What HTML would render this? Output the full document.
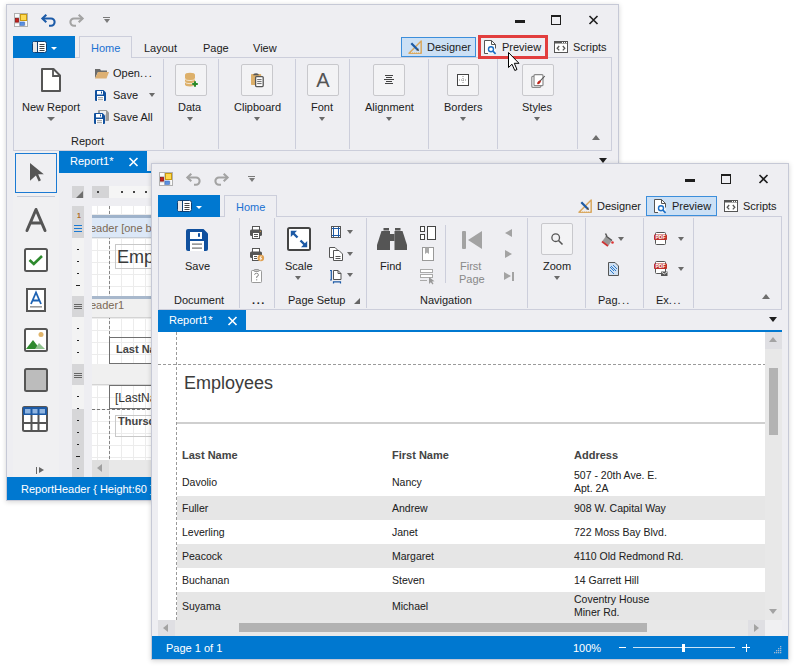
<!DOCTYPE html>
<html><head><meta charset="utf-8">
<style>
*{margin:0;padding:0;box-sizing:border-box}
html,body{width:795px;height:668px;overflow:hidden;background:#fff;font-family:"Liberation Sans",sans-serif;color:#1e1e1e}
.t,.a{-webkit-text-stroke:0.04px currentColor}
.a{position:absolute}
.win{position:absolute;background:#eeeef2;box-shadow:inset 0 0 0 1px #c6c9d6,0 1px 5px rgba(0,0,0,0.17)}
.t{position:absolute;font-size:11px;line-height:13px;white-space:nowrap;margin-top:1px}
.panel{position:absolute;border:1px solid #cccedb;border-top-color:#cccedb}
.sep{position:absolute;width:1px;background:#cccedb}
.status{position:absolute;background:#0078d0;color:#fff}
.tri{position:absolute;width:0;height:0;border-left:3.5px solid transparent;border-right:3.5px solid transparent;border-top:4px solid #6a6a6a;margin-left:0.5px}
.btnbox{position:absolute;width:32px;height:32px;border:1px solid #c8c8cc;border-radius:2px;background:#f3f3f5}
svg{position:absolute;overflow:visible}
</style></head><body>

<!-- ================= WINDOW 1 (Designer) ================= -->
<div class="win" id="w1" style="left:6px;top:4px;width:613px;height:497px">
  <!-- title bar -->
  <svg style="left:8px;top:9px" width="14" height="14" viewBox="0 0 14 14">
    <rect x="0.5" y="0.5" width="13" height="13" fill="#fafafa" stroke="#b0b0b0"/>
    <path d="M1 4.5 H5.5 M5.5 1 V13 M1 10 H5.5 M10.8 9 V13" stroke="#c8c8c8" stroke-width="1"/>
    <rect x="6.5" y="1.5" width="6" height="6" fill="#ffd94f" stroke="#c99a10"/>
    <rect x="1.5" y="5.5" width="3" height="3.6" fill="#c8201a" stroke="#8a1010" stroke-width="0.8"/>
    <rect x="6" y="9" width="4.3" height="3.4" fill="#5b90e0" stroke="#3a6cc0" stroke-width="0.6"/>
  </svg>
  <svg style="left:35px;top:10px" width="15" height="12" viewBox="0 0 15 12">
    <path d="M1.5 4.5 H10 A3.6 3.6 0 0 1 10 11.7 H8" fill="none" stroke="#1c5ba8" stroke-width="2.1"/>
    <path d="M5.3 0.8 L1.4 4.5 L5.3 8.2" fill="none" stroke="#1c5ba8" stroke-width="2.1"/>
  </svg>
  <svg style="left:63px;top:10px" width="15" height="12" viewBox="0 0 15 12">
    <path d="M13.5 4.5 H5 A3.6 3.6 0 0 0 5 11.7 H7" fill="none" stroke="#a3a3a3" stroke-width="2.1"/>
    <path d="M9.7 0.8 L13.6 4.5 L9.7 8.2" fill="none" stroke="#a3a3a3" stroke-width="2.1"/>
  </svg>
  <div class="a" style="left:97px;top:13px;width:7px;height:1px;background:#7a7a7a"></div>
  <div class="tri" style="left:97px;top:15px;border-left-width:3.5px;border-right-width:3.5px;border-top-width:4px;border-top-color:#7a7a7a"></div>
  <div class="a" style="left:509px;top:16px;width:10px;height:3px;background:#1e1e1e"></div>
  <div class="a" style="left:545px;top:11px;width:10px;height:10px;border:1px solid #1e1e1e;border-top-width:2px"></div>
  <svg style="left:583px;top:12px" width="9" height="8" viewBox="0 0 9 8"><path d="M0.5 0 L8.5 8 M8.5 0 L0.5 8" stroke="#1e1e1e" stroke-width="1.6"/></svg>

  <!-- tabs -->
  <div class="a" style="left:7px;top:32px;width:62px;height:22px;background:#0078d0;z-index:2"></div>
  <svg style="left:26px;top:37px;z-index:3" width="15" height="12" viewBox="0 0 15 12">
    <rect x="0.5" y="0.5" width="14" height="11" rx="2" fill="#fff" stroke="#0d3f73" stroke-width="1"/>
    <rect x="5" y="1" width="1" height="10" fill="#0d3f73"/>
    <rect x="1" y="1" width="4" height="10" fill="#e8e8e8"/>
    <path d="M7.5 3.5h5M7.5 5.5h5M7.5 7.5h5M7.5 9.5h5" stroke="#444" stroke-width="1"/>
  </svg>
  <div class="tri" style="left:45px;top:43px;border-left-width:3px;border-right-width:3px;border-top-width:3px;border-top-color:#fff;z-index:3;margin-left:0"></div>
  <div class="a" style="left:73px;top:32px;width:53px;height:22px;border:1px solid #cccedb;border-bottom:none;background:#eeeef2;z-index:1"></div>
  <div class="t" style="left:85px;top:37px;color:#1e73d2;z-index:2">Home</div>
  <div class="t" style="left:138px;top:37px">Layout</div>
  <div class="t" style="left:197px;top:37px">Page</div>
  <div class="t" style="left:247px;top:37px">View</div>

  <!-- Designer / Preview / Scripts -->
  <div class="a" style="left:395px;top:33px;width:75px;height:20px;border:1px solid #3c8edb;background:#cce0f5"></div>
  <svg style="left:402px;top:36px" width="14" height="14" viewBox="0 0 14 14">
    <path d="M13.2 1 V13.2 H1 Z" fill="none" stroke="#d9a860" stroke-width="1.5" stroke-linejoin="round"/>
    <path d="M3 12.6 H12.5" stroke="#fff" stroke-width="0.6" stroke-dasharray="0.8 1.2"/>
    <path d="M3.3 3.3 L9.2 9.2" stroke="#1d5aa5" stroke-width="2.3"/>
    <path d="M8.2 10.2 L10.2 8.2 L11 11 Z" fill="#333"/>
  </svg>
  <div class="t" style="left:421px;top:36px">Designer</div>
  <svg style="left:478px;top:36px" width="13" height="14" viewBox="0 0 13 14">
    <path d="M0.5 0.5 H7.5 L11.5 4.5 V13.5 H0.5 Z" fill="#fff" stroke="none"/>
    <path d="M11.5 8.5 V4.5 L7.5 0.5 H0.5 V13.5 H4" fill="none" stroke="#555"/>
    <path d="M7.5 0.5 V4.5 H11.5" fill="none" stroke="#555"/>
    <circle cx="7" cy="9.3" r="2.5" fill="#fff" stroke="#1d6fc6" stroke-width="1.4"/>
    <path d="M8.9 11.2 L11.6 13.9" stroke="#1d6fc6" stroke-width="1.7"/>
  </svg>
  <div class="t" style="left:496px;top:36px">Preview</div>
  <svg style="left:548px;top:37px" width="14" height="12" viewBox="0 0 14 12">
    <rect x="0.5" y="0.5" width="13" height="11" fill="#fff" stroke="#555"/>
    <rect x="0.5" y="0.5" width="13" height="2" fill="#555"/>
    <rect x="8" y="1" width="1" height="1" fill="#fff"/><rect x="10" y="1" width="1" height="1" fill="#fff"/><rect x="12" y="1" width="1" height="1" fill="#fff"/>
    <path d="M5.2 5 L3.2 7.2 L5.2 9.4 M8.8 5 L10.8 7.2 L8.8 9.4" fill="none" stroke="#555" stroke-width="1.3"/>
  </svg>
  <div class="t" style="left:567px;top:36px">Scripts</div>

  <!-- ribbon panel -->
  <div class="panel" style="left:7px;top:53px;width:599px;height:94px"></div>
  <div class="sep" style="left:157px;top:55px;height:90px"></div>
  <div class="sep" style="left:212px;top:55px;height:90px"></div>
  <div class="sep" style="left:289px;top:55px;height:90px"></div>
  <div class="sep" style="left:343px;top:55px;height:90px"></div>
  <div class="sep" style="left:422px;top:55px;height:90px"></div>
  <div class="sep" style="left:491px;top:55px;height:90px"></div>
  <div class="sep" style="left:571px;top:55px;height:90px"></div>

  <!-- Report group -->
  <svg style="left:35px;top:64px" width="20" height="24" viewBox="0 0 20 24">
    <path d="M1 1 H12.5 L19 7.5 V23 H1 Z" fill="#fff" stroke="#555" stroke-width="2" stroke-linejoin="round"/>
    <path d="M12 1.5 V8 H18.5" fill="none" stroke="#555" stroke-width="1.8"/>
  </svg>
  <div class="t" style="left:16px;top:96px">New Report</div>
  <div class="tri" style="left:40px;top:113px;border-left-width:4px;border-right-width:4px;border-top-width:4px"></div>
  <svg style="left:89px;top:64px" width="14" height="11" viewBox="0 0 14 11">
    <path d="M0 1 H5 L6 2.5 H12 V4 H3 L0 10.5 Z" fill="#6b6b6b"/>
    <path d="M3 4 H14 L11.5 10.5 H0 Z" fill="#ddb073"/>
  </svg>
  <div class="t" style="left:107px;top:62px">Open<span style="letter-spacing:1.3px">...</span></div>
  <svg style="left:89px;top:86px" width="11" height="11" viewBox="0 0 11 11"><g transform="translate(0 0)"><path d="M0 1 A1 1 0 0 1 1 0 H8.5 L11 2.5 V10 A1 1 0 0 1 10 11 H1 A1 1 0 0 1 0 10 Z" fill="#10509e"/><rect x="2" y="1" width="6" height="3.5" fill="#fff"/><rect x="6" y="1.5" width="1" height="2" fill="#10509e"/><rect x="2" y="6" width="7" height="5" fill="#fff"/><rect x="3" y="7.2" width="5" height="1" fill="#999"/><rect x="3" y="9.2" width="5" height="1" fill="#999"/></g></svg>
  <div class="t" style="left:107px;top:84px">Save</div>
  <div class="tri" style="left:142px;top:89px"></div>
  <svg style="left:88px;top:106px" width="15" height="14" viewBox="0 0 15 14"><g transform="translate(4 0)"><path d="M0 1 A1 1 0 0 1 1 0 H8.5 L11 2.5 V10 A1 1 0 0 1 10 11 H1 A1 1 0 0 1 0 10 Z" fill="#9a9a9a"/><rect x="2" y="1" width="6" height="3.5" fill="#eee"/></g><path d="M0 3 H11.5 V14 H0 Z" fill="#eeeef2"/><g transform="translate(0 3)"><path d="M0 1 A1 1 0 0 1 1 0 H8.5 L11 2.5 V10 A1 1 0 0 1 10 11 H1 A1 1 0 0 1 0 10 Z" fill="#10509e"/><rect x="2" y="1" width="6" height="3.5" fill="#fff"/><rect x="6" y="1.5" width="1" height="2" fill="#10509e"/><rect x="2" y="6" width="7" height="5" fill="#fff"/><rect x="3" y="7.2" width="5" height="1" fill="#999"/><rect x="3" y="9.2" width="5" height="1" fill="#999"/></g></svg>
  <div class="t" style="left:107px;top:106px">Save All</div>
  <div class="t" style="left:65px;top:130px">Report</div>

  <!-- Data -->
  <div class="btnbox" style="left:169px;top:60px"></div>
  <svg style="left:177px;top:68px" width="16" height="16" viewBox="0 0 16 16">
    <path d="M2 3 A5 2.2 0 0 1 12 3 V12.2 A5 2.2 0 0 1 2 12.2 Z" fill="#ddb06a"/>
    <path d="M2 6.3 A5 2.2 0 0 0 12 6.3 M2 9.4 A5 2.2 0 0 0 12 9.4" fill="none" stroke="#f4ead8" stroke-width="0.9"/>
    <path d="M9 10.8 H12 V13.2 H9 Z" fill="#f0f0f2"/>
    <path d="M9.2 12 H14.8 M12 9.2 V14.8" stroke="#2a8a2a" stroke-width="2"/>
  </svg>
  <div class="t" style="left:172px;top:96px">Data</div>
  <div class="tri" style="left:180px;top:113px"></div>

  <!-- Clipboard -->
  <div class="btnbox" style="left:235px;top:60px"></div>
  <svg style="left:244px;top:68px" width="16" height="16" viewBox="0 0 16 16">
    <rect x="1" y="2" width="10.2" height="11" rx="0.8" fill="#ddb06a"/>
    <path d="M3.2 3.2 A2.8 2 0 0 1 8.8 3.2 Z" fill="#555"/>
    <rect x="5.6" y="4.6" width="7.6" height="10" rx="1" fill="#fff" stroke="#555" stroke-width="1.3"/>
    <path d="M7.2 7.6 H11.6 M7.2 9.6 H11.6 M7.2 11.6 H11.6" stroke="#666" stroke-width="1"/>
  </svg>
  <div class="t" style="left:228px;top:96px">Clipboard</div>
  <div class="tri" style="left:247px;top:113px"></div>

  <!-- Font -->
  <div class="btnbox" style="left:301px;top:60px"></div>
  <div class="a" style="left:301px;top:64px;width:32px;text-align:center;font-size:20px;line-height:24px;color:#555">A</div>
  <div class="t" style="left:305px;top:96px">Font</div>
  <div class="tri" style="left:312px;top:113px"></div>

  <!-- Alignment -->
  <div class="btnbox" style="left:367px;top:60px"></div>
  <svg style="left:378px;top:71px" width="10" height="9" viewBox="0 0 10 9"><path d="M1 0.5h8M2 2.5h6M0 4.5h10M2 6.5h6M1 8.5h8" stroke="#444"/></svg>
  <div class="t" style="left:359px;top:96px">Alignment</div>
  <div class="tri" style="left:379px;top:113px"></div>

  <!-- Borders -->
  <div class="btnbox" style="left:441px;top:60px"></div>
  <svg style="left:451px;top:70px" width="12" height="12" viewBox="0 0 12 12"><rect x="0.5" y="0.5" width="11" height="11" fill="#fff" stroke="#444"/><path d="M6 2v8M2 6h8" stroke="#888" stroke-width="1" stroke-dasharray="1 1"/></svg>
  <div class="t" style="left:438px;top:96px">Borders</div>
  <div class="tri" style="left:453px;top:113px"></div>

  <!-- Styles -->
  <div class="btnbox" style="left:516px;top:60px"></div>
  <svg style="left:525px;top:68px" width="16" height="17" viewBox="0 0 16 17">
    <rect x="0.8" y="4.3" width="9" height="11" rx="1" fill="#fff" stroke="#8a8a8a" stroke-width="1.2"/>
    <rect x="3" y="2.7" width="9" height="11" rx="1" fill="#fff" stroke="#8a8a8a" stroke-width="1.2"/>
    <path d="M13.8 4 L9 9.2" stroke="#555" stroke-width="1.1"/>
    <ellipse cx="8" cy="10.4" rx="2.3" ry="1.3" transform="rotate(-45 8 10.4)" fill="#c0261c"/>
  </svg>
  <div class="t" style="left:516px;top:96px">Styles</div>
  <div class="tri" style="left:527px;top:113px"></div>

  <div class="tri" style="left:585px;top:131px;border-top:none;border-bottom:5px solid #6e6e6e;border-left-width:4.5px;border-right-width:4.5px"></div>

  <!-- toolbox column -->
  <div class="a" style="left:7px;top:147px;width:46px;height:326px;background:#f0f0f2"></div>
  <div class="a" style="left:9px;top:149px;width:42px;height:40px;border:1px solid #1b7ad3;background:#efeff2"></div>
  <svg style="left:24px;top:159px" width="14" height="20" viewBox="0 0 14 20">
    <path d="M0 0 L13.8 11.3 L8.2 11.3 L10.9 17.2 L8.7 18.4 L5.9 12.6 L0 17.8 Z" fill="#555"/>
  </svg>
  <div class="a" style="left:11px;top:192px;width:38px;height:1px;background:#c6cbd8"></div>
  <svg style="left:19px;top:204px" width="22" height="24" viewBox="0 0 22 24">
    <path d="M2 22.5 L11 1.5 L20 22.5 M5.5 15 H16.5" fill="none" stroke="#555" stroke-width="3" stroke-linecap="round" stroke-linejoin="round"/>
  </svg>
  <svg style="left:18px;top:244px" width="24" height="24" viewBox="0 0 24 24">
    <rect x="1" y="1" width="22" height="22" rx="1.5" fill="#fff" stroke="#555" stroke-width="2"/>
    <path d="M5.5 12 L9.8 16 L18 8" fill="none" stroke="#2e8a2e" stroke-width="2.6"/>
  </svg>
  <svg style="left:20px;top:284px" width="20" height="24" viewBox="0 0 20 24">
    <rect x="1" y="1" width="18" height="22" fill="#fff" stroke="#555" stroke-width="2"/>
    <path d="M5 16 L10 4.5 L15 16 M6.5 12.5 H13.5" fill="none" stroke="#1d62b3" stroke-width="1.8"/>
    <rect x="4" y="18" width="12" height="1.6" fill="#999"/>
  </svg>
  <svg style="left:18px;top:324px" width="24" height="24" viewBox="0 0 24 24">
    <rect x="1" y="1" width="22" height="22" rx="1.5" fill="#fff" stroke="#555" stroke-width="2"/>
    <path d="M2 21 L9 12 L16 21 Z" fill="#2e8a2e"/>
    <path d="M11 21 L15 15 L21 21 Z" fill="#8fc28f"/>
    <circle cx="17" cy="6.5" r="2.5" fill="#e0b46a"/>
  </svg>
  <svg style="left:18px;top:364px" width="24" height="24" viewBox="0 0 24 24">
    <rect x="1" y="1" width="22" height="22" rx="1.5" fill="#bcbcbc" stroke="#555" stroke-width="2"/>
  </svg>
  <svg style="left:16px;top:402px" width="26" height="26" viewBox="0 0 26 26">
    <rect x="1" y="1" width="24" height="24" rx="1.5" fill="#fff" stroke="#555" stroke-width="2"/>
    <rect x="1" y="1" width="24" height="8" fill="#1d5aa5"/>
    <rect x="3" y="3" width="5.5" height="4.5" fill="#8fb4e0"/><rect x="10.5" y="3" width="5" height="4.5" fill="#8fb4e0"/><rect x="17.5" y="3" width="5.5" height="4.5" fill="#8fb4e0"/>
    <path d="M9.5 9 V25 M16.5 9 V25 M1 17 H25" stroke="#555" stroke-width="2"/>
  </svg>
  <div class="a" style="left:30px;top:463px;width:1px;height:7px;background:#666"></div>
  <div class="a" style="left:33px;top:463px;width:0;height:0;border-top:3.5px solid transparent;border-bottom:3.5px solid transparent;border-left:5px solid #666"></div>

  <!-- doc tab strip -->
  <div class="a" style="left:53px;top:147px;width:88px;height:20px;background:#0078d0"></div>
  <div class="a" style="left:53px;top:167px;width:560px;height:2px;background:#0078d0"></div>
  <div class="t" style="left:64px;top:150px;color:#fff">Report1*</div>
  <svg style="left:123px;top:154px" width="9" height="8" viewBox="0 0 9 8"><path d="M0.5 0 L8.5 8 M8.5 0 L0.5 8" stroke="#fff" stroke-width="1.6"/></svg>
  <div class="tri" style="left:592px;top:154px;border-top-color:#1e1e1e;border-top-width:5px;border-left-width:4.5px;border-right-width:4.5px"></div>

  <!-- designer surface -->
  <div class="a" style="left:66px;top:182px;width:12px;height:12px;background:#d4d4d6"></div>
  <div class="a" style="left:70px;top:187px;width:0;height:0;border-left:7px solid transparent;border-bottom:7px solid #6e6e6e"></div>
  <div class="a" style="left:86px;top:182px;width:200px;height:12px;background:#f5f5f5"></div>
  <div class="a" style="left:86px;top:182px;width:17px;height:12px;background:#d4d4d6"></div>
  <div class="a" style="left:91px;top:187px;width:2px;height:2px;background:#444"></div>
  <div class="a" style="left:115px;top:187px;width:2px;height:2px;background:#444"></div>
  <div class="a" style="left:127px;top:187px;width:2px;height:2px;background:#444"></div>
  <div class="a" style="left:139px;top:187px;width:2px;height:2px;background:#444"></div>

  <!-- vertical ruler -->
  <div class="a" style="left:66px;top:202px;width:12px;height:271px;background:#f3f3f3"></div>
  <div class="a" style="left:66px;top:202px;width:12px;height:32px;background:#d6d6d8"></div>
  <div class="a" style="left:66px;top:292px;width:12px;height:21px;background:#d6d6d8"></div>
  <div class="a" style="left:66px;top:360px;width:12px;height:21px;background:#d6d6d8"></div>
  <div class="a" style="left:66px;top:405px;width:12px;height:68px;background:#d6d6d8"></div>
  <div class="a" style="left:71px;top:208px;font-size:7px;line-height:7px;font-weight:bold;color:#b06a1c">1</div>
  <div class="a" style="left:68px;top:221px;width:8px;height:1px;background:#1b7ad3;box-shadow:0 3px 0 #1b7ad3,0 6px 0 #1b7ad3"></div>
  <div class="a" style="left:68px;top:300px;width:8px;height:1px;background:#666;box-shadow:0 2px 0 #666,0 4px 0 #666"></div>
  <div class="a" style="left:68px;top:369px;width:8px;height:1px;background:#666;box-shadow:0 2px 0 #666,0 4px 0 #666"></div>
  <div class="a" style="left:71px;top:245px;width:2px;height:1px;background:#222;box-shadow:0 12px 0 #222,0 24px 0 #222"></div>
  <div class="a" style="left:70px;top:281px;width:4px;height:1px;background:#222"></div>
  <div class="a" style="left:71px;top:324px;width:2px;height:1px;background:#222;box-shadow:0 12px 0 #222,0 24px 0 #222"></div>
  <div class="a" style="left:71px;top:392px;width:2px;height:1px;background:#222;box-shadow:0 12px 0 #222,0 24px 0 #222,0 36px 0 #222,0 48px 0 #222"></div>
  <div class="a" style="left:70px;top:452px;width:4px;height:1px;background:#222"></div>
  <div class="a" style="left:71px;top:464px;width:2px;height:1px;background:#222"></div>

  <!-- surface -->
  <div class="a" style="left:86px;top:202px;width:527px;height:254px;background:#fff;overflow:hidden">
    <div class="a" style="left:0;top:0;width:527px;height:254px;background-image:linear-gradient(90deg,#ececec 1px,transparent 1px),linear-gradient(#ececec 1px,transparent 1px);background-size:12px 12px;background-position:5px 8px"></div>
    <div class="a" style="left:0;top:112px;width:527px;height:46px;background-color:#fff;background-image:linear-gradient(90deg,#ececec 1px,transparent 1px),linear-gradient(#ececec 1px,transparent 1px);background-size:12px 12px;background-position:5px 0"></div>
    <div class="a" style="left:0;top:179px;width:527px;height:75px;background-color:#fff;background-image:linear-gradient(90deg,#ececec 1px,transparent 1px),linear-gradient(#ececec 1px,transparent 1px);background-size:12px 12px;background-position:5px 0"></div>
    <div class="a" style="left:17px;top:0;width:1px;height:254px;background-image:linear-gradient(#858585 3px,transparent 3px);background-size:1px 5px"></div>
    <!-- band 1 header -->
    <div class="a" style="left:0;top:9px;width:527px;height:3px;background:#9fb3cb"></div>
    <div class="a" style="left:0;top:12px;width:527px;height:20px;background:#dce8f7;border-bottom:1px solid #c4ccd6"></div>
    <div class="a" style="left:-10px;top:16px;font-size:11px;line-height:13px;color:#7d6b58;white-space:nowrap">Header [one band per report]</div>
    <!-- Employees label -->
    <div class="a" style="left:23px;top:38px;width:300px;height:25px;border:1px solid #c8c8c8"></div>
    <div class="a" style="left:25px;top:41px;font-size:18px;line-height:20px;color:#3a3a3a;white-space:nowrap">Employees</div>
    <!-- band 2 header -->
    <div class="a" style="left:0;top:90px;width:527px;height:3px;background:#a8b8cc"></div>
    <div class="a" style="left:0;top:93px;width:527px;height:19px;background:#f0f0f0;border-bottom:1px solid #d4d4d4"></div>
    <div class="a" style="left:-10px;top:93px;font-size:11px;line-height:13px;color:#7d6b58;white-space:nowrap">Header1</div>
    <!-- Last Name cell -->
    <div class="a" style="left:17px;top:131px;width:300px;height:27px;border:1px solid #707070;border-right:none"></div>
    <div class="a" style="left:24px;top:137px;font-size:11px;line-height:13px;font-weight:bold;color:#444;white-space:nowrap">Last Name</div>
    <!-- band 3 header -->
    <div class="a" style="left:0;top:158px;width:527px;height:21px;background:#f0f0f0;border-bottom:1px solid #d4d4d4"></div>
    <!-- [LastName] -->
    <div class="a" style="left:17px;top:179px;width:300px;height:24px;border-left:1px solid #707070;border-bottom:1px solid #707070;border-top:1px solid #707070"></div>
    <div class="a" style="left:23px;top:185px;font-size:12px;line-height:14px;color:#333;white-space:nowrap">[LastName]</div>
    <div class="a" style="left:0;top:203px;width:527px;height:1px;background-image:linear-gradient(90deg,#777 3px,transparent 3px);background-size:5px 1px"></div>
    <div class="a" style="left:23px;top:209px;width:300px;height:22px;border:1px solid #c8c8c8"></div>
    <div class="a" style="left:26px;top:209px;font-size:11px;line-height:13px;font-weight:bold;color:#444;white-space:nowrap">Thursday</div>
  </div>
  <!-- h scrollbar -->
  <div class="a" style="left:86px;top:456px;width:527px;height:17px;background:#e8e8e8"></div>
  <div class="a" style="left:86px;top:456px;width:17px;height:17px;background:#dedede"></div>
  <div class="a" style="left:91px;top:460px;width:0;height:0;border-top:4.5px solid transparent;border-bottom:4.5px solid transparent;border-right:5px solid #a0a0a0"></div>

  <!-- status -->
  <div class="status" style="left:1px;top:473px;width:611px;height:23px"></div>
  <div class="t" style="left:15px;top:478px;color:#fff">ReportHeader { Height:60 }</div>

  <!--W1END-->
</div>


<!-- annotation overlay for w1 -->
<div class="a" style="left:478px;top:35px;width:70px;height:24px;border:3px solid #e23e3e;z-index:5"></div>
<svg style="left:508px;top:52px;z-index:6" width="13" height="20" viewBox="0 0 13 20">
  <path d="M0.5 0.5 V15.5 L4 12.2 L6.8 18.5 L9 17.5 L6.3 11.3 H11 Z" fill="#fff" stroke="#000" stroke-width="1" stroke-linejoin="round"/>
</svg>

<!-- ================= WINDOW 2 (Preview) ================= -->
<div class="win" id="w2" style="left:151px;top:163px;width:638px;height:497px">
  <!-- title bar -->
  <svg style="left:8px;top:9px" width="14" height="14" viewBox="0 0 14 14">
    <rect x="0.5" y="0.5" width="13" height="13" fill="#fafafa" stroke="#b0b0b0"/>
    <path d="M1 4.5 H5.5 M5.5 1 V13 M1 10 H5.5 M10.8 9 V13" stroke="#c8c8c8" stroke-width="1"/>
    <rect x="6.5" y="1.5" width="6" height="6" fill="#ffd94f" stroke="#c99a10"/>
    <rect x="1.5" y="5.5" width="3" height="3.6" fill="#c8201a" stroke="#8a1010" stroke-width="0.8"/>
    <rect x="6" y="9" width="4.3" height="3.4" fill="#5b90e0" stroke="#3a6cc0" stroke-width="0.6"/>
  </svg>
  <svg style="left:35px;top:10px" width="15" height="12" viewBox="0 0 15 12">
    <path d="M1.5 4.5 H10 A3.6 3.6 0 0 1 10 11.7 H8" fill="none" stroke="#a3a3a3" stroke-width="2.1"/>
    <path d="M5.3 0.8 L1.4 4.5 L5.3 8.2" fill="none" stroke="#a3a3a3" stroke-width="2.1"/>
  </svg>
  <svg style="left:63px;top:10px" width="15" height="12" viewBox="0 0 15 12">
    <path d="M13.5 4.5 H5 A3.6 3.6 0 0 0 5 11.7 H7" fill="none" stroke="#a3a3a3" stroke-width="2.1"/>
    <path d="M9.7 0.8 L13.6 4.5 L9.7 8.2" fill="none" stroke="#a3a3a3" stroke-width="2.1"/>
  </svg>
  <div class="a" style="left:97px;top:13px;width:7px;height:1px;background:#7a7a7a"></div>
  <div class="tri" style="left:97px;top:15px;border-left-width:3.5px;border-right-width:3.5px;border-top-width:4px;border-top-color:#7a7a7a"></div>
  <div class="a" style="left:534px;top:16px;width:10px;height:3px;background:#1e1e1e"></div>
  <div class="a" style="left:570px;top:11px;width:10px;height:10px;border:1px solid #1e1e1e;border-top-width:2px"></div>
  <svg style="left:608px;top:12px" width="9" height="8" viewBox="0 0 9 8"><path d="M0.5 0 L8.5 8 M8.5 0 L0.5 8" stroke="#1e1e1e" stroke-width="1.6"/></svg>

  <!-- tabs -->
  <div class="a" style="left:7px;top:32px;width:62px;height:22px;background:#0078d0;z-index:2"></div>
  <svg style="left:26px;top:37px;z-index:3" width="15" height="12" viewBox="0 0 15 12">
    <rect x="0.5" y="0.5" width="14" height="11" rx="2" fill="#fff" stroke="#0d3f73" stroke-width="1"/>
    <rect x="5" y="1" width="1" height="10" fill="#0d3f73"/>
    <rect x="1" y="1" width="4" height="10" fill="#e8e8e8"/>
    <path d="M7.5 3.5h5M7.5 5.5h5M7.5 7.5h5M7.5 9.5h5" stroke="#444" stroke-width="1"/>
  </svg>
  <div class="tri" style="left:45px;top:43px;border-left-width:3px;border-right-width:3px;border-top-width:3px;border-top-color:#fff;z-index:3;margin-left:0"></div>
  <div class="a" style="left:73px;top:32px;width:53px;height:22px;border:1px solid #cccedb;border-bottom:none;background:#eeeef2;z-index:1"></div>
  <div class="t" style="left:85px;top:37px;color:#1e73d2;z-index:2">Home</div>

  <!-- Designer / Preview / Scripts -->
  <svg style="left:427px;top:36px" width="14" height="14" viewBox="0 0 14 14">
    <path d="M13.2 1 V13.2 H1 Z" fill="none" stroke="#d9a860" stroke-width="1.5" stroke-linejoin="round"/>
    <path d="M3 12.6 H12.5" stroke="#fff" stroke-width="0.6" stroke-dasharray="0.8 1.2"/>
    <path d="M3.3 3.3 L9.2 9.2" stroke="#1d5aa5" stroke-width="2.3"/>
    <path d="M8.2 10.2 L10.2 8.2 L11 11 Z" fill="#333"/>
  </svg>
  <div class="t" style="left:446px;top:36px">Designer</div>
  <div class="a" style="left:495px;top:33px;width:71px;height:20px;border:1px solid #3c8edb;background:#cce0f5"></div>
  <svg style="left:503px;top:36px" width="13" height="14" viewBox="0 0 13 14">
    <path d="M0.5 0.5 H7.5 L11.5 4.5 V13.5 H0.5 Z" fill="#fff" stroke="none"/>
    <path d="M11.5 8.5 V4.5 L7.5 0.5 H0.5 V13.5 H4" fill="none" stroke="#555"/>
    <path d="M7.5 0.5 V4.5 H11.5" fill="none" stroke="#555"/>
    <circle cx="7" cy="9.3" r="2.5" fill="#fff" stroke="#1d6fc6" stroke-width="1.4"/>
    <path d="M8.9 11.2 L11.6 13.9" stroke="#1d6fc6" stroke-width="1.7"/>
  </svg>
  <div class="t" style="left:521px;top:36px">Preview</div>
  <svg style="left:573px;top:37px" width="14" height="12" viewBox="0 0 14 12">
    <rect x="0.5" y="0.5" width="13" height="11" fill="#fff" stroke="#555"/>
    <rect x="0.5" y="0.5" width="13" height="2" fill="#555"/>
    <rect x="8" y="1" width="1" height="1" fill="#fff"/><rect x="10" y="1" width="1" height="1" fill="#fff"/><rect x="12" y="1" width="1" height="1" fill="#fff"/>
    <path d="M5.2 5 L3.2 7.2 L5.2 9.4 M8.8 5 L10.8 7.2 L8.8 9.4" fill="none" stroke="#555" stroke-width="1.3"/>
  </svg>
  <div class="t" style="left:592px;top:36px">Scripts</div>

  <!-- ribbon panel -->
  <div class="panel" style="left:7px;top:53px;width:624px;height:94px"></div>
  <div class="sep" style="left:88px;top:55px;height:90px"></div>
  <div class="sep" style="left:123px;top:55px;height:90px"></div>
  <div class="sep" style="left:215px;top:55px;height:90px"></div>
  <div class="sep" style="left:376px;top:55px;height:90px"></div>
  <div class="sep" style="left:434px;top:55px;height:90px"></div>
  <div class="sep" style="left:492px;top:55px;height:90px"></div>
  <div class="sep" style="left:542px;top:55px;height:90px"></div>

  <!-- Document group -->
  <svg style="left:35px;top:66px" width="22" height="22" viewBox="0 0 22 22">
    <path d="M0 2 A2 2 0 0 1 2 0 H17.5 L22 4.5 V20 A2 2 0 0 1 20 22 H2 A2 2 0 0 1 0 20 Z" fill="#10509e"/>
    <rect x="4" y="3" width="12" height="7" fill="#fff"/>
    <rect x="12" y="4.2" width="2" height="3.6" fill="#10509e"/>
    <rect x="4" y="12" width="14" height="10" fill="#fff"/>
    <rect x="6" y="14.3" width="10" height="1.7" fill="#999"/>
    <rect x="6" y="18.3" width="10" height="1.7" fill="#999"/>
  </svg>
  <div class="t" style="left:34px;top:96px">Save</div>
  <div class="t" style="left:23px;top:130px">Document</div>

  <!-- print group -->
  <svg style="left:99px;top:63px" width="13" height="13" viewBox="0 0 13 13">
    <rect x="2.5" y="0.5" width="7" height="4" fill="#fff" stroke="#555"/>
    <rect x="0" y="3.5" width="12" height="6.5" rx="1.5" fill="#555"/>
    <rect x="2.5" y="6.5" width="7" height="6" fill="#fff" stroke="#555"/>
    <path d="M4 8.5 H8 M4 10.5 H8" stroke="#555"/>
    <circle cx="10.3" cy="5.3" r="0.6" fill="#e8a640"/>
  </svg>
  <svg style="left:99px;top:85px" width="15" height="14" viewBox="0 0 15 14">
    <rect x="2.5" y="0.5" width="7" height="4" fill="#fff" stroke="#555"/>
    <rect x="0" y="3.5" width="12" height="6.5" rx="1.5" fill="#555"/>
    <rect x="2.5" y="6.5" width="7" height="6" fill="#fff" stroke="#555"/>
    <path d="M4 8.5 H7 M4 10.5 H7" stroke="#555"/>
    <circle cx="10.8" cy="10" r="3.3" fill="#e0a050"/>
    <path d="M11.4 7.8 L9.9 10.3 H11.7 L10.2 12.4" stroke="#fff" stroke-width="0.9" fill="none"/>
  </svg>
  <svg style="left:100px;top:106px" width="11" height="14" viewBox="0 0 11 14">
    <rect x="0.5" y="1.5" width="10" height="12" rx="0.8" fill="#fff" stroke="#9a9a9a"/>
    <rect x="3" y="0.5" width="5" height="2" rx="0.8" fill="#ccc" stroke="#9a9a9a"/>
    <path d="M3.6 5.8 A1.9 1.7 0 1 1 5.7 7.6 V9" fill="none" stroke="#888" stroke-width="1"/>
    <rect x="5.2" y="10.2" width="1" height="1.2" fill="#888"/>
  </svg>
  <div class="t" style="left:101px;top:130px"><span style="letter-spacing:1.6px;font-weight:bold">...</span></div>

  <!-- Page setup -->
  <svg style="left:136px;top:64px" width="24" height="24" viewBox="0 0 24 24">
    <rect x="1" y="1" width="22" height="22" rx="1.5" fill="#fff" stroke="#444" stroke-width="2"/>
    <path d="M5.5 5.5 L10.5 10.5 M13.5 13.5 L18.5 18.5" stroke="#1d5aa5" stroke-width="2.4"/>
    <path d="M3.8 3.8 H10 L3.8 10 Z M20.2 20.2 H14 L20.2 14 Z" fill="#1d5aa5"/>
  </svg>
  <div class="t" style="left:134px;top:96px">Scale</div>
  <div class="tri" style="left:143px;top:113px"></div>
  <svg style="left:180px;top:63px" width="10" height="12" viewBox="0 0 10 12">
    <rect x="0.5" y="0.5" width="9" height="11" fill="#fff" stroke="#555"/>
    <path d="M2.5 1 V11 M7.5 1 V11 M1 2.5 H9 M1 9.5 H9" stroke="#1d5aa5" stroke-width="1"/>
  </svg>
  <div class="tri" style="left:195px;top:67px"></div>
  <svg style="left:178px;top:84px" width="14" height="14" viewBox="0 0 14 14">
    <path d="M0.5 0.5 H6 L8.5 3 V10.5 H0.5 Z" fill="#fff" stroke="#555"/>
    <path d="M4.5 3.5 H10 L13.5 7 V13.5 H4.5 Z" fill="#fff" stroke="#555"/>
    <path d="M6.5 9.5h5M6.5 11.5h5" stroke="#555"/>
  </svg>
  <div class="tri" style="left:195px;top:89px"></div>
  <svg style="left:178px;top:106px" width="13" height="15" viewBox="0 0 13 15">
    <path d="M1 1.5 H2.3 V11 H1" fill="none" stroke="#1d5aa5" stroke-width="1.2"/>
    <path d="M4.5 1.5 H9 L12 4.5 V10.5 H4.5 Z" fill="#fff" stroke="#555"/>
    <path d="M9 1.5 V4.5 H12" fill="none" stroke="#555"/>
    <path d="M4.5 14.5 V12.8 H11.5 V14.5" fill="none" stroke="#1d5aa5" stroke-width="1.2"/>
  </svg>
  <div class="tri" style="left:195px;top:110px"></div>
  <div class="t" style="left:137px;top:130px">Page Setup</div>
  <div class="a" style="left:203px;top:135px;width:0;height:0;border-left:6px solid transparent;border-bottom:6px solid #666"></div>

  <!-- Navigation -->
  <svg style="left:226px;top:65px" width="31" height="24" viewBox="0 0 31 24">
    <rect x="6.5" y="0" width="5.5" height="2.5" fill="#555"/><rect x="18" y="0" width="5.5" height="2.5" fill="#555"/>
    <path d="M4.5 3 H13 V22 H0 V17 Z" fill="#555"/>
    <path d="M25.5 3 H17.5 V22 H30 V17 Z" fill="#555"/>
    <rect x="13" y="6" width="4.5" height="7" fill="#555"/>
  </svg>
  <div class="t" style="left:229px;top:96px">Find</div>
  <svg style="left:269px;top:63px" width="16" height="14" viewBox="0 0 16 14">
    <rect x="0.5" y="0.5" width="4" height="5" fill="#fff" stroke="#444"/>
    <rect x="0.5" y="8.5" width="4" height="5" fill="#fff" stroke="#444"/>
    <rect x="7.5" y="0.5" width="8" height="13" fill="#fff" stroke="#444"/>
  </svg>
  <svg style="left:271px;top:84px" width="12" height="14" viewBox="0 0 12 14">
    <rect x="0.5" y="0.5" width="11" height="13" fill="#fff" stroke="#999"/>
    <path d="M3 0.5 V7 L5 5.5 L7 7 V0.5 Z" fill="#aaa"/>
  </svg>
  <svg style="left:269px;top:106px" width="16" height="15" viewBox="0 0 16 15">
    <rect x="0.5" y="0.5" width="12" height="3" fill="#fff" stroke="#aaa"/>
    <rect x="0.5" y="5.5" width="12" height="3" fill="#fff" stroke="#aaa"/>
    <path d="M0 11.5 H7" stroke="#aaa"/>
    <path d="M9 8 L9 15 L10.8 13.3 L12.5 15.5 L13.5 14.8 L12 12.6 L14.5 12.3 Z" fill="#999"/>
  </svg>
  <div class="sep" style="left:294px;top:62px;height:58px"></div>
  <svg style="left:311px;top:68px" width="20" height="18" viewBox="0 0 20 18">
    <rect x="0" y="0" width="4" height="18" rx="1" fill="#a3a3a3"/>
    <path d="M20 0 V18 L6 9 Z" fill="#a3a3a3"/>
  </svg>
  <div class="t" style="left:309px;top:96px;color:#8a8a8a">First</div>
  <div class="t" style="left:308px;top:109px;color:#8a8a8a">Page</div>
  <div class="a" style="left:354px;top:66px;width:0;height:0;border-top:4.5px solid transparent;border-bottom:4.5px solid transparent;border-right:7px solid #a3a3a3"></div>
  <div class="a" style="left:354px;top:87px;width:0;height:0;border-top:4.5px solid transparent;border-bottom:4.5px solid transparent;border-left:7px solid #a3a3a3"></div>
  <div class="a" style="left:353px;top:109px;width:0;height:0;border-top:4.5px solid transparent;border-bottom:4.5px solid transparent;border-left:7px solid #a3a3a3"></div>
  <div class="a" style="left:361px;top:109px;width:2px;height:9px;background:#a3a3a3"></div>
  <div class="t" style="left:269px;top:130px">Navigation</div>

  <!-- Zoom -->
  <div class="btnbox" style="left:390px;top:60px"></div>
  <svg style="left:400px;top:70px" width="12" height="12" viewBox="0 0 12 12">
    <circle cx="4.7" cy="4.7" r="3.8" fill="none" stroke="#555" stroke-width="1.3"/>
    <path d="M7.5 7.5 L11.5 11.5" stroke="#555" stroke-width="1.6"/>
  </svg>
  <div class="t" style="left:392px;top:96px">Zoom</div>
  <div class="tri" style="left:402px;top:113px"></div>

  <!-- Page bg -->
  <svg style="left:450px;top:70px" width="14" height="13" viewBox="0 0 14 13">
    <path d="M5 3 L11 7.5 L7.5 12.5 L1.5 8 Z" fill="#999"/>
    <path d="M4.5 0.5 L6 3.5 M5 3 L11 7.5" stroke="#555" stroke-width="1.5"/>
    <path d="M1 8.5 L7 13" stroke="#c33" stroke-width="1.8"/>
    <circle cx="11.5" cy="9.5" r="1.3" fill="#d33"/>
  </svg>
  <div class="tri" style="left:466px;top:74px"></div>
  <svg style="left:457px;top:99px" width="11" height="14" viewBox="0 0 11 14">
    <path d="M0.5 0.5 H7 L10.5 4 V13.5 H0.5 Z" fill="#cfe0f3" stroke="#555"/>
    <path d="M2 5 L6 9 M2 8 L6 12 M3 4 L8 9 M5 3 L9 7" stroke="#1d6fc6" stroke-width="0.9"/>
  </svg>
  <div class="t" style="left:447px;top:130px">Pag<span style="letter-spacing:1.3px">...</span></div>

  <!-- Export -->
  <svg style="left:503px;top:69px" width="14" height="13" viewBox="0 0 14 13">
    <rect x="1.5" y="0.5" width="10" height="12" rx="1" fill="#fff" stroke="#555"/>
    <rect x="0" y="2.5" width="13" height="5.5" rx="0.8" fill="#c0302a"/>
    <text x="6.5" y="7" font-size="5" font-family="Liberation Sans" font-weight="bold" fill="#fff" text-anchor="middle">PDF</text>
  </svg>
  <div class="tri" style="left:526px;top:74px"></div>
  <svg style="left:503px;top:98px" width="14" height="16" viewBox="0 0 14 16">
    <rect x="1.5" y="0.5" width="10" height="12" rx="1" fill="#fff" stroke="#555"/>
    <rect x="0" y="2.5" width="13" height="5.5" rx="0.8" fill="#c0302a"/>
    <text x="6.5" y="7" font-size="5" font-family="Liberation Sans" font-weight="bold" fill="#fff" text-anchor="middle">PDF</text>
    <rect x="7" y="10.5" width="6.5" height="4.5" fill="#555"/>
    <path d="M7.5 11 L10.25 13 L13 11" stroke="#fff" stroke-width="0.8" fill="none"/>
  </svg>
  <div class="tri" style="left:526px;top:104px"></div>
  <div class="t" style="left:505px;top:130px">Ex<span style="letter-spacing:1.3px">...</span></div>

  <div class="tri" style="left:610px;top:131px;border-top:none;border-bottom:5px solid #6e6e6e;border-left-width:4.5px;border-right-width:4.5px"></div>

  <!-- doc tab strip -->
  <div class="a" style="left:7px;top:147px;width:88px;height:20px;background:#0078d0"></div>
  <div class="a" style="left:7px;top:167px;width:624px;height:2px;background:#0078d0"></div>
  <div class="t" style="left:18px;top:150px;color:#fff">Report1*</div>
  <svg style="left:77px;top:154px" width="9" height="8" viewBox="0 0 9 8"><path d="M0.5 0 L8.5 8 M8.5 0 L0.5 8" stroke="#fff" stroke-width="1.6"/></svg>
  <div class="tri" style="left:617px;top:154px;border-top-color:#1e1e1e;border-top-width:5px;border-left-width:4.5px;border-right-width:4.5px"></div>

  <!-- report surface -->
  <div class="a" style="left:7px;top:169px;width:607px;height:288px;background:#fff;overflow:hidden;font-size:11px;line-height:13px;color:#222">
    <div class="a" style="left:18px;top:0;width:1px;height:288px;background-image:linear-gradient(#9a9a9a 3px,transparent 3px);background-size:1px 5px"></div>
    <div class="a" style="left:0;top:32px;width:607px;height:1px;background-image:linear-gradient(90deg,#9a9a9a 3px,transparent 3px);background-size:5px 1px"></div>
    <div class="a" style="left:26px;top:41px;font-size:18px;line-height:20px;color:#3c3c3c;white-space:nowrap">Employees</div>
    <div class="a" style="left:19px;top:90px;width:588px;height:2px;background:#cfcfcf"></div>
    <div class="a" style="left:24px;top:117px;font-weight:bold;color:#444;white-space:nowrap">Last Name</div>
    <div class="a" style="left:234px;top:117px;font-weight:bold;color:#444;white-space:nowrap">First Name</div>
    <div class="a" style="left:416px;top:117px;font-weight:bold;color:#444;white-space:nowrap">Address</div>
    <div class="a" style="left:19px;top:164px;width:588px;height:24px;background:#e6e6e6"></div>
    <div class="a" style="left:19px;top:212px;width:588px;height:24px;background:#e6e6e6"></div>
    <div class="a" style="left:19px;top:260px;width:588px;height:28px;background:#e6e6e6"></div>

    <div class="a" style="left:0;top:0;width:607px;height:288px;font-size:10.5px;line-height:12px;white-space:nowrap">
      <div class="a" style="left:24px;top:144.4px">Davolio</div><div class="a" style="left:234px;top:144.4px">Nancy</div>
      <div class="a" style="left:416px;top:137.4px">507 - 20th Ave. E.</div><div class="a" style="left:416px;top:150.1px">Apt. 2A</div>
      <div class="a" style="left:24px;top:169.6px">Fuller</div><div class="a" style="left:234px;top:169.6px">Andrew</div><div class="a" style="left:416px;top:169.6px">908 W. Capital Way</div>
      <div class="a" style="left:24px;top:193.9px">Leverling</div><div class="a" style="left:234px;top:193.9px">Janet</div><div class="a" style="left:416px;top:193.9px">722 Moss Bay Blvd.</div>
      <div class="a" style="left:24px;top:218.1px">Peacock</div><div class="a" style="left:234px;top:218.1px">Margaret</div><div class="a" style="left:416px;top:218.1px">4110 Old Redmond Rd.</div>
      <div class="a" style="left:24px;top:242.4px">Buchanan</div><div class="a" style="left:234px;top:242.4px">Steven</div><div class="a" style="left:416px;top:242.4px">14 Garrett Hill</div>
      <div class="a" style="left:24px;top:268px">Suyama</div><div class="a" style="left:234px;top:268px">Michael</div>
      <div class="a" style="left:416px;top:261.4px">Coventry House</div><div class="a" style="left:416px;top:273.9px">Miner Rd.</div>
    </div>
  </div>
  <!-- v scrollbar -->
  <div class="a" style="left:614px;top:169px;width:17px;height:288px;background:#e8e8e8"></div>
  <div class="a" style="left:614px;top:169px;width:17px;height:17px;background:#dfdfe3"></div>
  <div class="a" style="left:618px;top:174px;width:0;height:0;border-left:4.5px solid transparent;border-right:4.5px solid transparent;border-bottom:5px solid #a3a3a3"></div>
  <div class="a" style="left:618px;top:205px;width:9px;height:67px;background:#b3b3b3"></div>
  <div class="a" style="left:618px;top:446px;width:0;height:0;border-left:4.5px solid transparent;border-right:4.5px solid transparent;border-top:5px solid #a3a3a3"></div>
  <!-- h scrollbar -->
  <div class="a" style="left:7px;top:457px;width:607px;height:16px;background:#e8e8e8"></div>
  <div class="a" style="left:7px;top:457px;width:17px;height:16px;background:#dfdfe3"></div>
  <div class="a" style="left:12px;top:461px;width:0;height:0;border-top:4px solid transparent;border-bottom:4px solid transparent;border-right:5px solid #a3a3a3"></div>
  <div class="a" style="left:88px;top:460px;width:408px;height:9px;background:#b3b3b3"></div>
  <div class="a" style="left:597px;top:457px;width:17px;height:16px;background:#dfdfe3"></div>
  <div class="a" style="left:603px;top:461px;width:0;height:0;border-top:4px solid transparent;border-bottom:4px solid transparent;border-left:5px solid #a3a3a3"></div>
  <div class="a" style="left:614px;top:457px;width:17px;height:16px;background:#f0f0f2"></div>

  <!-- status -->
  <div class="status" style="left:1px;top:473px;width:636px;height:23px"></div>
  <div class="t" style="left:15px;top:478px;color:#fff">Page 1 of 1</div>
  <div class="t" style="left:422px;top:478px;color:#fff">100%</div>
  <div class="a" style="left:468px;top:484px;width:7px;height:1px;background:#fff"></div>
  <div class="a" style="left:482px;top:484px;width:102px;height:1px;background:rgba(255,255,255,0.8)"></div>
  <div class="a" style="left:531px;top:481px;width:3px;height:8px;background:#fff"></div>
  <div class="a" style="left:591px;top:484px;width:8px;height:1px;background:#fff"></div>
  <div class="a" style="left:594.5px;top:480.5px;width:1px;height:8px;background:#fff"></div>
  <svg style="left:622px;top:483px" width="9" height="9" viewBox="0 0 9 9">
    <g fill="#9fb8d4"><rect x="7" y="0" width="1.3" height="1.3"/><rect x="5" y="2" width="1.3" height="1.3"/><rect x="7" y="2" width="1.3" height="1.3"/><rect x="3" y="4" width="1.3" height="1.3"/><rect x="5" y="4" width="1.3" height="1.3"/><rect x="7" y="4" width="1.3" height="1.3"/><rect x="1" y="6" width="1.3" height="1.3"/><rect x="3" y="6" width="1.3" height="1.3"/><rect x="5" y="6" width="1.3" height="1.3"/><rect x="7" y="6" width="1.3" height="1.3"/></g>
  </svg>

  <!--W2END-->
</div>

</body></html>
